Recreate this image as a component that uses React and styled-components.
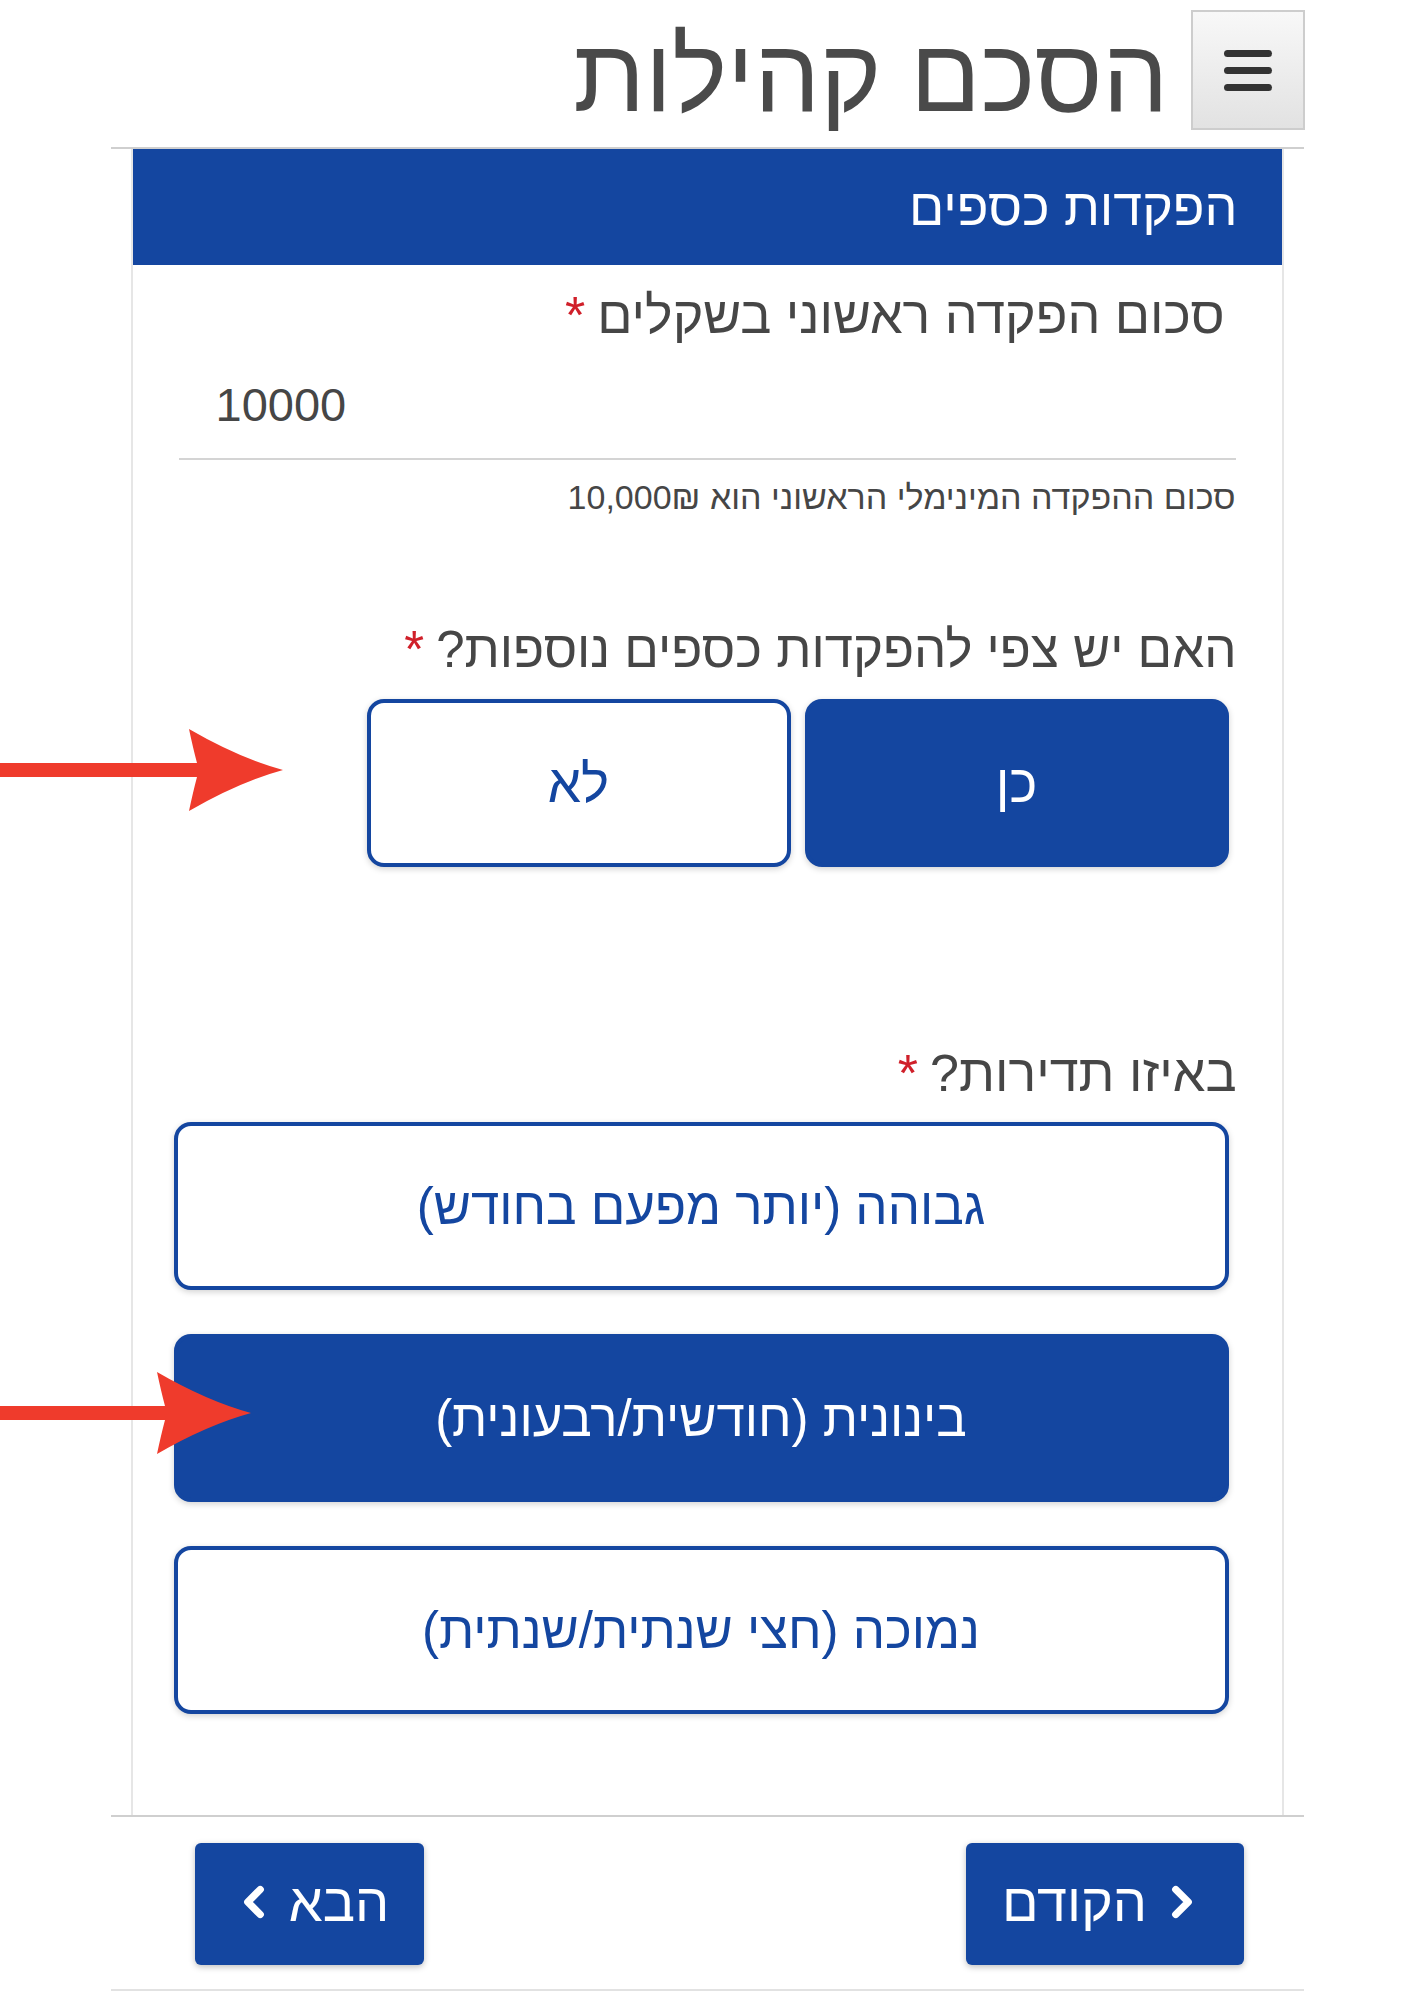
import styled, { createGlobalStyle } from "styled-components";
import { ChevronLeft, ChevronRight } from "lucide-react";

const BLUE = "#1446a0";

const GlobalStyle = createGlobalStyle`
  body {
    margin: 0;
    background: #fff;
    font-family: "Liberation Sans", "Open Sans", "DejaVu Sans", sans-serif;
  }
`;

const Screen = styled.div`
  position: relative;
  width: 1414px;
  min-height: 2000px;
  overflow: hidden;
`;

const Page = styled.div`
  direction: rtl;
  width: 1193px;
  margin: 0 auto;
`;

const Header = styled.header`
  display: flex;
  align-items: flex-start;
  gap: 22px;
  height: 137px;
  padding-top: 10px;
  border-bottom: 2px solid #cfcfcf;
`;

const MenuButton = styled.button`
  width: 114px;
  height: 120px;
  margin-right: -1px;
  display: flex;
  flex-direction: column;
  align-items: center;
  justify-content: center;
  gap: 10px;
  border: 2px solid #cdcdcd;
  background: linear-gradient(#f8f8f8, #e2e2e2);
  padding: 0;

  span {
    display: block;
    width: 48px;
    height: 7px;
    border-radius: 4px;
    background: #333;
  }
`;

const Title = styled.h1`
  margin: 0;
  font-size: 104px;
  font-weight: 400;
  line-height: 130px;
  color: #4a4a4a;
`;

const Card = styled.section`
  margin: 0 20px;
  border-left: 2px solid #e6e6e6;
  border-right: 2px solid #e6e6e6;
  padding-bottom: 101px;
`;

const SectionBar = styled.div`
  height: 116px;
  display: flex;
  align-items: center;
  padding-right: 44px;
  background: ${BLUE};
  color: #fff;
  font-size: 52px;
`;

const Body = styled.div`
  padding: 0 53px 0 41px;
`;

const Label = styled.div`
  font-size: ${(p) => p.$size || 52}px;
  line-height: 56px;
  color: #464646;
  margin-top: ${(p) => p.$top}px;
  margin-right: -8px;
  padding-right: ${(p) => p.$inset || 0}px;

  b {
    color: #d0202a;
    font-weight: 400;
    margin-right: 12px;
  }
`;

const AmountInput = styled.input`
  display: block;
  box-sizing: border-box;
  width: calc(100% + 2px);
  margin: 0 -7px 0 5px;
  height: 117px;
  padding: 8px 0 0 37px;
  border: 0;
  border-bottom: 2px solid #d4d4d4;
  direction: ltr;
  text-align: left;
  font-family: inherit;
  font-size: 47px;
  color: #464646;
  background: transparent;
  outline: none;
`;

const Hint = styled.div`
  margin-top: 17px;
  margin-right: -7px;
  font-size: 34px;
  line-height: 40px;
  color: #464646;
`;

const Pair = styled.div`
  display: flex;
  gap: 14px;
  margin-top: 21px;
`;

const Choice = styled.button`
  box-sizing: border-box;
  width: ${(p) => p.$width || "100%"};
  height: 168px;
  border: 4px solid ${BLUE};
  border-radius: 17px;
  background: ${(p) => (p.$on ? BLUE : "#fff")};
  color: ${(p) => (p.$on ? "#fff" : BLUE)};
  font-family: inherit;
  font-size: ${(p) => p.$size || 53}px;
  box-shadow: 0 2px 6px rgba(0, 0, 0, 0.18);
  padding: 0;
  cursor: pointer;
`;

const Stack = styled.div`
  display: flex;
  flex-direction: column;
  gap: 44px;
  margin-top: 21px;
`;

const Footer = styled.footer`
  display: flex;
  justify-content: space-between;
  align-items: center;
  padding: 26px 60px 24px 84px;
  border-top: 2px solid #cfcfcf;
  border-bottom: 2px solid #e2e2e2;
`;

const NavButton = styled.button`
  box-sizing: border-box;
  width: ${(p) => p.$width}px;
  height: 122px;
  display: flex;
  align-items: center;
  justify-content: center;
  gap: 10px;
  border: 0;
  border-radius: 6px;
  background: ${BLUE};
  color: #fff;
  font-family: inherit;
  font-size: 54px;
  box-shadow: 0 2px 6px rgba(0, 0, 0, 0.25);
  padding: 0 0 4px;
`;

const Pointer = styled.svg`
  position: absolute;
  left: 0;
  top: ${(p) => p.$top}px;
`;

// red pointer arrow sitting over the left margin
const Arrow = ({ top, width, height }) => {
  const head = width - 94;
  const mid = height / 2;
  return (
    <Pointer $top={top} width={width} height={height} viewBox={`0 0 ${width} ${height}`}>
      <path
        d={`M0 ${mid - 7} H${head + 8} Q${head + 4} ${mid - 22} ${head} 0 Q${head + 50} ${mid - 12} ${width} ${mid} Q${head + 50} ${mid + 12} ${head} ${height} Q${head + 4} ${mid + 22} ${head + 8} ${mid + 7} H0 Z`}
        fill="#ef3b2c"
      />
    </Pointer>
  );
};

const frequencies = [
  { text: "גבוהה (יותר מפעם בחודש)", on: false },
  { text: "בינונית (חודשית/רבעונית)", on: true },
  { text: "נמוכה (חצי שנתית/שנתית)", on: false },
];

export default function App() {
  return (
    <Screen>
      <GlobalStyle />
      <Page>
        <Header>
          <MenuButton aria-label="תפריט">
            <span />
            <span />
            <span />
          </MenuButton>
          <Title>הסכם קהילות</Title>
        </Header>

        <Card>
          <SectionBar>הפקדות כספים</SectionBar>
          <Body>
            <Label $top={22} $inset={12}>
              סכום הפקדה ראשוני בשקלים<b>*</b>
            </Label>
            <AmountInput defaultValue="10000" />
            <Hint>סכום ההפקדה המינימלי הראשוני הוא 10,000₪</Hint>

            <Label $top={105} $size={51}>
              האם יש צפי להפקדות כספים נוספות?<b>*</b>
            </Label>
            <Pair>
              <Choice $on $width="424px">כן</Choice>
              <Choice $width="424px">לא</Choice>
            </Pair>

            <Label $top={178}>
              באיזו תדירות?<b>*</b>
            </Label>
            <Stack>
              {frequencies.map((f) => (
                <Choice key={f.text} $on={f.on} $size={51}>
                  {f.text}
                </Choice>
              ))}
            </Stack>
          </Body>
        </Card>

        <Footer>
          <NavButton $width={278}>
            <ChevronRight size={50} strokeWidth={3.5} />
            הקודם
          </NavButton>
          <NavButton $width={229}>
            הבא
            <ChevronLeft size={50} strokeWidth={3.5} />
          </NavButton>
        </Footer>
      </Page>

      <Arrow top={729} width={283} height={82} />
      <Arrow top={1372} width={251} height={82} />
    </Screen>
  );
}
